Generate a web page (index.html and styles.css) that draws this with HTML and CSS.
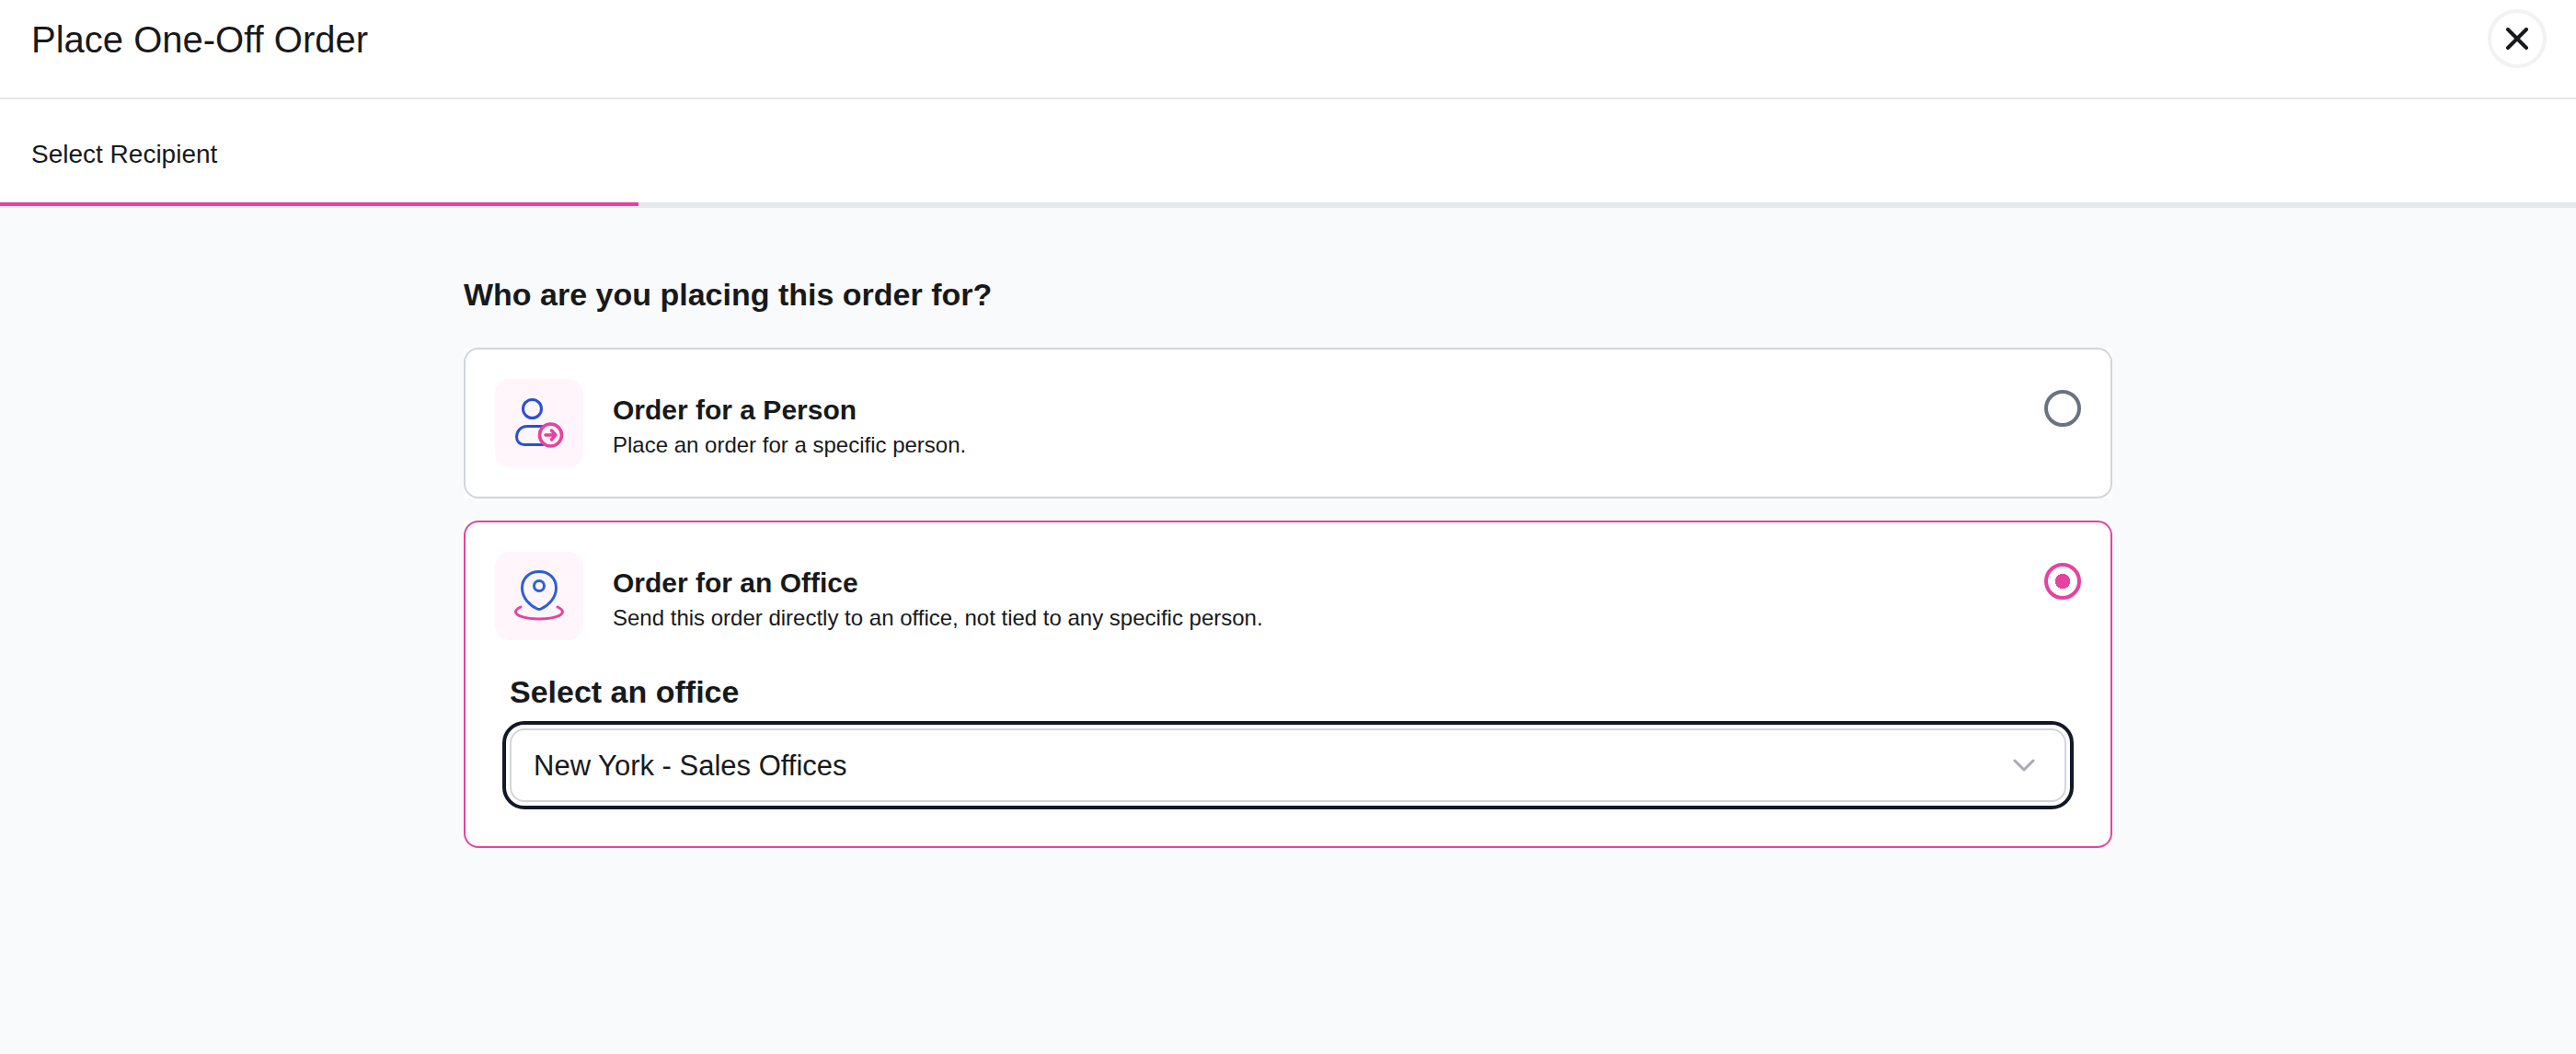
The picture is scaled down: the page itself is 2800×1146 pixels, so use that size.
FILE: index.html
```html
<!DOCTYPE html>
<html lang="en">

<head>
    <title>Place One-Off Order</title>
    <meta charset="UTF-8">
    <meta name="viewport" content="width=device-width, initial-scale=1.0">
    <link rel="stylesheet" href="styles.css">
</head>
<body>
    <header class="header">
        <h1 class="title">Place One-Off Order</h1>
        <button class="close" type="button" aria-label="Close">
            <svg viewBox="0 0 24 24" width="24" height="24">
                <path d="M2 2L22 22M22 2L2 22" fill="none" stroke="currentColor" stroke-width="4" stroke-linecap="round"/>
            </svg>
        </button>
    </header>

    <nav class="steps">
        <div class="step">Select Recipient</div>
        <div class="progress">
            <div class="progress-done"></div>
        </div>
    </nav>

    <main>
        <form class="order">
            <h2 class="question">Who are you placing this order for?</h2>

            <div class="option">
                <div class="card">
                    <label class="choice" for="person">
                        <span class="icon">
                            <svg viewBox="0 0 56 56" width="56" height="56" fill="none" stroke-linecap="round">
                                <g stroke="#2850d4" stroke-width="3">
                                    <circle cx="20.5" cy="12.5" r="10"/>
                                    <path d="M31 31.5H15C8 31.5 3.5 37 3.5 43C3.5 48 7 51.5 12 51.5H32"/>
                                </g>
                                <g stroke="#e5439f" stroke-width="3.5">
                                    <circle cx="40.5" cy="41" r="12" fill="#fff5fb"/>
                                    <path d="M35 41H46M41.5 36L46 41L41.5 46" stroke-linejoin="round"/>
                                </g>
                            </svg>
                        </span>
                        <span class="text">
                            <span class="name">Order for a Person</span>
                            <span class="info">Place an order for a specific person.</span>
                        </span>
                        <input class="radio" type="radio" name="recipient" id="person">
                    </label>
                </div>
            </div>

            <div class="option">
                <div class="card selected">
                    <label class="choice" for="office">
                        <span class="icon">
                            <svg viewBox="0 0 56 56" width="56" height="56" fill="none" stroke-linecap="round">
                                <g stroke="#2c5fd3" stroke-width="3">
                                    <path d="M26 42C18 38.5 9.5 30 9.5 19.5C9.5 8.5 17.5 1.5 28 1.5C38.5 1.5 46.5 8.5 46.5 19.5C46.5 30 38 38.5 30 42Q28 43 26 42Z"/>
                                    <circle cx="28" cy="17" r="5.5"/>
                                </g>
                                <path d="M8 40C4 42 2.5 43.5 2.5 45C2.5 49.5 13 53 28 53C43 53 53.5 49.5 53.5 45C53.5 43.5 52 42 48 40" stroke="#e5439f" stroke-width="3"/>
                            </svg>
                        </span>
                        <span class="text">
                            <span class="name">Order for an Office</span>
                            <span class="info">Send this order directly to an office, not tied to any specific person.</span>
                        </span>
                        <input class="radio" type="radio" name="recipient" id="office" checked>
                    </label>

                    <div class="office">
                        <label class="office-label" for="office-list">Select an office</label>
                        <div class="select">
                            <select id="office-list">
                                <option>New York - Sales Offices</option>
                            </select>
                            <svg class="chevron" viewBox="0 0 24 14" width="24" height="14">
                                <path d="M2 2L12 12L22 2" fill="none" stroke="currentColor" stroke-width="3" stroke-linecap="round" stroke-linejoin="round"/>
                            </svg>
                        </div>
                    </div>
                </div>
            </div>
        </form>
    </main>
</body>
</html>
```

FILE: styles.css
```css
* {
    box-sizing: border-box;
}
body {
    margin: 0;
    min-height: 100vh;
    font-family: "Liberation Sans", Arial, sans-serif;
    color: #18191b;
    background-color: #f9fafc;
}

/****** HEADER ******/
.header {
    display: flex;
    justify-content: space-between;
    align-items: center;
    padding: 10px 32px 32px 34px;
    background-color: #fff;
    border-bottom: 2px solid #e5e7eb;
}
.title {
    margin: 0;
    padding-top: 2px;
    font-size: 40px;
    font-weight: 400;
    line-height: 62px;
}
.close {
    display: flex;
    justify-content: center;
    align-items: center;
    width: 64px;
    height: 64px;
    padding: 0;
    color: #18191b;
    background-color: #fff;
    border: 4px solid #f3f1f4;
    border-radius: 50%;
    cursor: pointer;
}

/****** STEPS ******/
.steps {
    background-color: #fff;
}
.step {
    padding: 44px 34px 36px;
    font-size: 28px;
    line-height: 32px;
}
.progress {
    display: grid;
    grid-template-columns: repeat(4, 1fr);
    column-gap: 8px;
    height: 6px;
    background-color: #e5e7eb;
}
.progress-done {
    height: 4px;
    background-color: #e5439f;
}

/****** ORDER ******/
.order {
    display: flex;
    flex-direction: column;
    gap: 24px;
    max-width: 1792px;
    margin: 0 auto;
    padding: 72px 0;
}
.question {
    margin: 0 0 12px;
    font-size: 34px;
    line-height: 44px;
}
.option {
    background-color: #fff;
}
.card {
    padding: 32px;
    background-color: #fff;
    border: 2px solid #d1d5db;
    border-radius: 16px;
}
.selected {
    border-color: #e5439f;
}
.choice {
    display: flex;
    gap: 32px;
    cursor: pointer;
}
.icon {
    display: flex;
    justify-content: center;
    align-items: center;
    width: 96px;
    height: 96px;
    background-color: #fff5fb;
    border-radius: 16px;
}
.text {
    display: flex;
    flex: 1;
    flex-direction: column;
    justify-content: center;
    padding-top: 8px;
}
.name {
    font-size: 30px;
    font-weight: 700;
    line-height: 40px;
}
.info {
    font-size: 24px;
    line-height: 36px;
}
.radio {
    appearance: none;
    width: 40px;
    height: 40px;
    margin: 12px 0 0;
    background-color: #fff;
    border: 4px solid #6b7280;
    border-radius: 50%;
}
.radio:checked {
    background-image: radial-gradient(circle, #e5439f 8px, #fff 8px);
    border-color: #e5439f;
}

/****** OFFICE ******/
.office {
    display: flex;
    flex-direction: column;
    gap: 18px;
    padding: 34px 16px 16px;
}
.office-label {
    font-size: 34px;
    font-weight: 700;
    line-height: 44px;
}
.select {
    display: grid;
    align-items: center;
}
/* the chevron shares the cell of the select */
.select select,
.chevron {
    grid-area: 1 / 1;
}
.select select {
    appearance: none;
    width: 100%;
    height: 80px;
    padding: 0 80px 0 24px;
    font-family: inherit;
    font-size: 31px;
    color: inherit;
    background-color: #fff;
    border: 2px solid #d1d5db;
    border-radius: 16px;
    outline: 4px solid #111827;
    outline-offset: 4px;
}
.chevron {
    justify-self: end;
    margin-right: 34px;
    color: #a9aab3;
    pointer-events: none;
}
```
